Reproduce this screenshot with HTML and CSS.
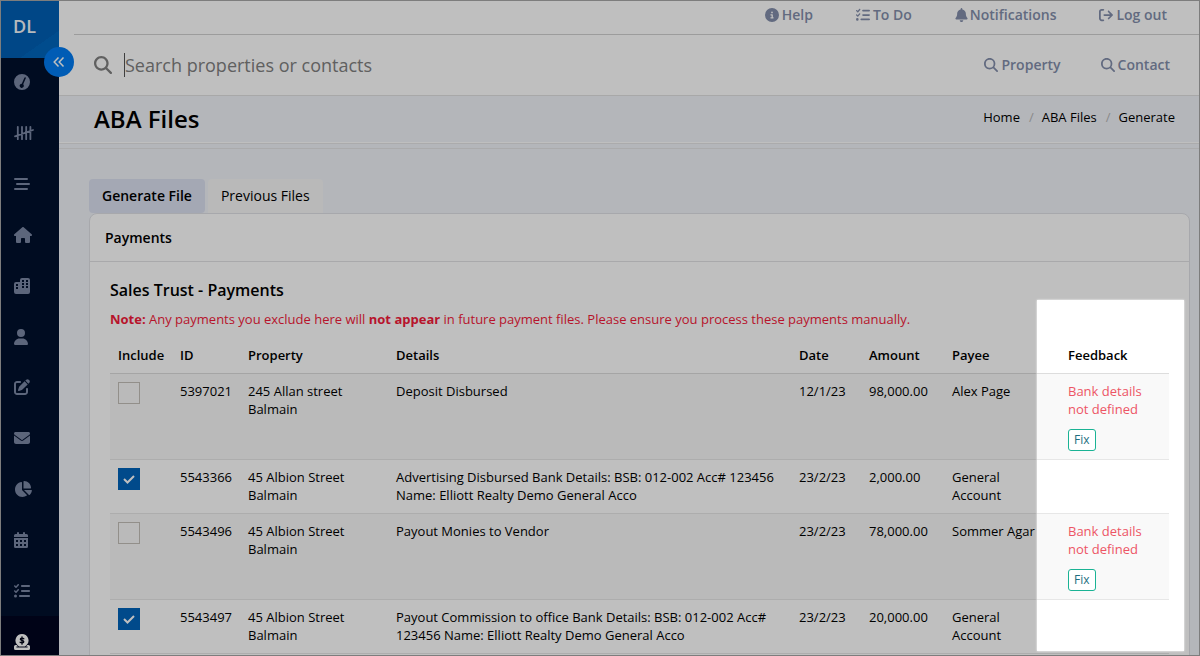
FILE: index.html
```html
<!DOCTYPE html>
<html lang="en">
<head>
<meta charset="utf-8">
<title>ABA Files</title>
<meta name="viewport" content="width=device-width, initial-scale=1">
<link rel="stylesheet" href="styles.css">
</head>
<body>
<svg class="sprite" aria-hidden="true">
  <symbol id="i-search" viewBox="0 0 512 512"><path d="M416 208c0 45.9-14.9 88.3-40 122.7L502.6 457.4c12.5 12.5 12.5 32.8 0 45.3s-32.8 12.5-45.3 0L330.7 376c-34.4 25.2-76.8 40-122.7 40C93.1 416 0 322.9 0 208S93.1 0 208 0S416 93.1 416 208zM208 352a144 144 0 1 0 0-288 144 144 0 1 0 0 288z"/></symbol>
  <symbol id="i-info" viewBox="0 0 512 512"><path d="M256 512A256 256 0 1 0 256 0a256 256 0 1 0 0 512zM216 336h24V272H216c-13.3 0-24-10.7-24-24s10.7-24 24-24h48c13.3 0 24 10.7 24 24v88h8c13.3 0 24 10.7 24 24s-10.7 24-24 24H216c-13.3 0-24-10.7-24-24s10.7-24 24-24zm40-208a32 32 0 1 1 0 64 32 32 0 1 1 0-64z"/></symbol>
  <symbol id="i-list" viewBox="0 0 512 512"><path d="M152.1 38.2c9.9 8.9 10.7 24 1.8 33.9l-72 80c-4.4 4.9-10.6 7.8-17.2 7.9s-12.9-2.4-17.6-7L7 113C-2.3 103.6-2.3 88.4 7 79s24.6-9.4 33.9 0l22.1 22.1 55.1-61.2c8.9-9.9 24-10.7 33.9-1.8zm0 160c9.9 8.9 10.7 24 1.8 33.9l-72 80c-4.4 4.9-10.6 7.8-17.2 7.9s-12.9-2.4-17.6-7L7 273c-9.4-9.4-9.4-24.6 0-33.9s24.6-9.4 33.9 0l22.1 22.1 55.1-61.2c8.9-9.9 24-10.7 33.9-1.8zM224 96c0-17.7 14.3-32 32-32H480c17.7 0 32 14.3 32 32s-14.3 32-32 32H256c-17.7 0-32-14.3-32-32zm0 160c0-17.7 14.3-32 32-32H480c17.7 0 32 14.3 32 32s-14.3 32-32 32H256c-17.7 0-32-14.3-32-32zM160 416c0-17.7 14.3-32 32-32H480c17.7 0 32 14.3 32 32s-14.3 32-32 32H192c-17.7 0-32-14.3-32-32zM48 368a48 48 0 1 1 0 96 48 48 0 1 1 0-96z"/></symbol>
  <symbol id="i-bell" viewBox="0 0 448 512"><path d="M224 0c-17.7 0-32 14.3-32 32V51.2C119 66 64 130.6 64 208v18.8c0 47-17.3 92.4-48.5 127.6l-7.4 8.3c-8.4 9.4-10.4 22.9-5.3 34.4S19.4 416 32 416H416c12.6 0 24-7.4 29.2-18.9s3.1-25-5.3-34.4l-7.4-8.3C401.3 319.2 384 273.9 384 226.8V208c0-77.4-55-142-128-156.8V32c0-17.7-14.3-32-32-32zm45.3 493.3c12-12 18.7-28.3 18.7-45.3H224 160c0 17 6.7 33.3 18.7 45.3s28.3 18.7 45.3 18.7s33.3-6.7 45.3-18.7z"/></symbol>
  <symbol id="i-logout" viewBox="0 0 512 512"><path d="M502.6 278.6c12.5-12.5 12.5-32.8 0-45.3l-128-128c-12.5-12.5-32.8-12.5-45.3 0s-12.5 32.8 0 45.3L402.7 224 192 224c-17.7 0-32 14.3-32 32s14.3 32 32 32l210.7 0-73.4 73.4c-12.5 12.5-12.5 32.8 0 45.3s32.8 12.5 45.3 0l128-128zM160 96c17.7 0 32-14.3 32-32s-14.3-32-32-32L96 32C43 32 0 75 0 128L0 384c0 53 43 96 96 96l64 0c17.7 0 32-14.3 32-32s-14.3-32-32-32l-64 0c-17.7 0-32-14.3-32-32l0-256c0-17.7 14.3-32 32-32l64 0z"/></symbol>
  <symbol id="i-gauge" viewBox="0 0 16 16"><path fill-rule="evenodd" d="M8 0a8 8 0 1 0 0 16A8 8 0 0 0 8 0zM11.4 3.3a.75.75 0 0 1 .4 1L9.2 10.300a2.100 2.100 0 1 1-1.400-.6L10.400 3.700a.75.75 0 0 1 1-.4z"/></symbol>
  <symbol id="i-tally" viewBox="0 0 20 16"><path fill="none" stroke="currentColor" stroke-width="1.8" stroke-linecap="round" d="M3.800 1.800v12.400M8 1.800v12.400M12.200 1.800v12.400M16.400 1.800v12.400M1 11.300l18-6.300"/></symbol>
  <symbol id="i-bars" viewBox="0 0 16 16"><path fill="none" stroke="currentColor" stroke-width="2" stroke-linecap="round" d="M1 3h12M3 8h12M1 13h12"/></symbol>
  <symbol id="i-house" viewBox="0 0 576 512"><path d="M575.800 255.500c0 18-15 32.100-32 32.100h-32l.7 160.200c0 2.700-.2 5.400-.5 8.100V472c0 22.100-17.900 40-40 40H392c-22.100 0-40-17.900-40-40V384c0-17.700-14.300-32-32-32H256c-17.700 0-32 14.300-32 32v88c0 22.100-17.900 40-40 40H104c-22.100 0-40-17.900-40-40V287.600H32c-18 0-32-14-32-32.100c0-9 3-17 10-24L266.400 8c7-7 15-8 22-8s15 2 21 7L564.800 231.500c8 7 12 15 11 24z"/></symbol>
  <symbol id="i-city" viewBox="0 0 16 16"><path fill-rule="evenodd" d="M6 2a2 2 0 0 1 2-2h6a2 2 0 0 1 2 2v12a2 2 0 0 1-2 2H2a2 2 0 0 1-2-2V6a2 2 0 0 1 2-2h4zM8 2v2h2V2zM12 2v2h2V2zM8 5v2h2V5zM12 5v2h2V5zM8 8v2h2V8zM12 8v2h2V8zM2 6v2h2V6zM2 9v2h2V9z"/></symbol>
  <symbol id="i-user" viewBox="0 0 448 512"><path d="M224 256A128 128 0 1 0 224 0a128 128 0 1 0 0 256zm-45.700 48C79.800 304 0 383.800 0 482.300C0 498.700 13.300 512 29.700 512H418.300c16.400 0 29.700-13.300 29.700-29.700C448 383.800 368.200 304 269.700 304H178.300z"/></symbol>
  <symbol id="i-edit" viewBox="0 0 512 512"><path d="M471.600 21.700c-21.900-21.900-57.300-21.900-79.200 0L362.300 51.700l97.900 97.900 30.100-30.100c21.900-21.900 21.900-57.300 0-79.200L471.600 21.700zm-299.200 220c-6.100 6.100-10.800 13.600-13.500 21.900l-29.600 88.800c-2.900 8.600-.6 18.100 5.800 24.600s15.900 8.700 24.600 5.800l88.800-29.600c8.200-2.700 15.700-7.400 21.900-13.500L437.700 172.300 339.700 74.300 172.400 241.700zM96 64C43 64 0 107 0 160V416c0 53 43 96 96 96H352c53 0 96-43 96-96V320c0-17.700-14.300-32-32-32s-32 14.300-32 32v96c0 17.700-14.300 32-32 32H96c-17.700 0-32-14.300-32-32V160c0-17.700 14.300-32 32-32h96c17.700 0 32-14.300 32-32s-14.300-32-32-32H96z"/></symbol>
  <symbol id="i-mail" viewBox="0 0 512 512"><path d="M48 64C21.500 64 0 85.500 0 112c0 15.100 7.100 29.300 19.200 38.400L236.800 313.600c11.400 8.500 27 8.500 38.400 0L492.800 150.400c12.100-9.100 19.200-23.300 19.200-38.400c0-26.500-21.500-48-48-48H48zM0 176V384c0 35.300 28.700 64 64 64H448c35.300 0 64-28.700 64-64V176L294.400 339.200c-22.800 17.100-54 17.100-76.800 0L0 176z"/></symbol>
  <symbol id="i-pie" viewBox="0 0 576 512"><path d="M304 240V16.600c0-9 7-16.600 16-16.600C443.700 0 544 100.300 544 224c0 9-7.600 16-16.600 16H304zM32 272C32 150.700 122.100 50.300 239 34.300c9.200-1.300 17 6.100 17 15.400V288L412.500 444.500c6.700 6.700 6.200 17.700-1.500 23.100C371.800 495.600 323.800 512 272 512C139.500 512 32 404.600 32 272zm526.400 16c9.300 0 16.600 7.800 15.400 17c-7.700 55.900-34.600 105.600-73.900 142.300c-6 5.600-15.400 5.200-21.200-.7L320 288H558.400z"/></symbol>
  <symbol id="i-calendar" viewBox="0 0 14 16"><path fill-rule="evenodd" d="M3 1a1 1 0 0 1 2 0v1h4V1a1 1 0 0 1 2 0v1h1.500A1.500 1.500 0 0 1 14 3.500V5H0V3.500A1.500 1.500 0 0 1 1.500 2H3zM0 6h14v8.500a1.500 1.500 0 0 1-1.500 1.500h-11A1.500 1.500 0 0 1 0 14.500zM2 8v2h2V8zM6 8v2h2V8zM10 8v2h2V8zM2 12v2h2v-2zM6 12v2h2v-2zM10 12v2h2v-2z"/></symbol>
  <symbol id="i-coin" viewBox="0 0 16 16"><path d="M1.500 11h1.200a6.600 6.600 0 0 0 1.300 1.400H2.400V13.600h11.200V12.400H12a6.600 6.600 0 0 0 1.300-1.400h1.200A1.500 1.500 0 0 1 16 12.500v2A1.500 1.500 0 0 1 14.500 16h-13A1.500 1.500 0 0 1 0 14.500v-2A1.500 1.500 0 0 1 1.500 11z"/><path d="M8 0a6.500 6.500 0 0 1 4.600 11.100L11 12.600H5L3.400 11.100A6.500 6.500 0 0 1 8 0z"/><path fill="none" stroke="#000417" stroke-width="1.300" stroke-linecap="round" d="M8 2.800v7.400M9.800 4.700C9 4 6.300 3.900 6.300 5.300c0 1.500 3.500.9 3.500 2.500 0 1.500-2.800 1.300-3.700.5"/></symbol>
</svg>

<div class="page">
  <aside class="sidebar">
    <a class="logo" href="#">DL</a>
    <nav class="menu" aria-label="Main">
      <a href="#" aria-label="Dashboard"><svg class="icon"><use href="#i-gauge"/></svg></a>
      <a href="#" aria-label="Tally"><svg class="icon icon-wide"><use href="#i-tally"/></svg></a>
      <a href="#" aria-label="Pipeline"><svg class="icon"><use href="#i-bars"/></svg></a>
      <a href="#" aria-label="Home"><svg class="icon icon-mid"><use href="#i-house"/></svg></a>
      <a href="#" aria-label="Properties"><svg class="icon"><use href="#i-city"/></svg></a>
      <a href="#" aria-label="Contacts"><svg class="icon icon-slim"><use href="#i-user"/></svg></a>
      <a href="#" aria-label="Edit"><svg class="icon"><use href="#i-edit"/></svg></a>
      <a href="#" aria-label="Mail"><svg class="icon"><use href="#i-mail"/></svg></a>
      <a href="#" aria-label="Reports"><svg class="icon icon-mid"><use href="#i-pie"/></svg></a>
      <a href="#" aria-label="Calendar"><svg class="icon icon-slim"><use href="#i-calendar"/></svg></a>
      <a href="#" aria-label="Tasks"><svg class="icon"><use href="#i-list"/></svg></a>
      <a class="active" href="#" aria-label="Trust"><svg class="icon"><use href="#i-coin"/></svg></a>
    </nav>
    <button class="collapse" type="button" aria-label="Expand menu"><svg viewBox="0 0 12 12"><path d="M5.500 1.500L1.200 6l4.300 4.500M10.500 1.500L6.200 6l4.300 4.500"/></svg></button>
  </aside>

  <div class="main">
    <header class="header">
      <nav class="topbar" aria-label="Account">
        <a href="#"><svg class="glyph"><use href="#i-info"/></svg>Help</a>
        <a href="#"><svg class="glyph"><use href="#i-list"/></svg>To Do</a>
        <a class="tight" href="#"><svg class="glyph glyph-bell"><use href="#i-bell"/></svg>Notifications</a>
        <a href="#"><svg class="glyph"><use href="#i-logout"/></svg>Log out</a>
      </nav>
      <form class="searchbar">
        <label class="search-label" for="search" aria-label="Search"><svg class="search-icon"><use href="#i-search"/></svg></label>
        <input class="search-input" id="search" type="text" placeholder="Search properties or contacts">
        <div class="search-links">
          <a href="#"><svg class="glyph"><use href="#i-search"/></svg>Property</a>
          <a href="#"><svg class="glyph"><use href="#i-search"/></svg>Contact</a>
        </div>
      </form>
    </header>

    <div class="heading">
      <h1>ABA Files</h1>
      <ol class="breadcrumb">
        <li><a href="#">Home</a></li>
        <li><a href="#">ABA Files</a></li>
        <li><a href="#">Generate</a></li>
      </ol>
    </div>

    <main class="content">
      <div class="tabs">
        <button class="tab tab-active" type="button">Generate File</button>
        <button class="tab" type="button">Previous Files</button>
      </div>
      <section class="card">
        <h2 class="card-title">Payments</h2>
        <div class="card-body">
          <h3>Sales Trust - Payments</h3>
          <p class="note"><strong>Note:</strong> Any payments you exclude here will <strong>not appear</strong> in future payment files. Please ensure you process these payments manually.</p>
          <table class="payments">
            <colgroup>
              <col class="c-include"><col class="c-id"><col class="c-property"><col><col class="c-date"><col class="c-amount"><col class="c-payee"><col class="c-feedback">
            </colgroup>
            <thead>
              <tr><th>Include</th><th>ID</th><th>Property</th><th>Details</th><th>Date</th><th>Amount</th><th>Payee</th><th>Feedback</th></tr>
            </thead>
            <tbody>
              <tr>
                <td><input type="checkbox" aria-label="Include 5397021"></td>
                <td>5397021</td><td>245 Allan street<br>Balmain</td><td>Deposit Disbursed</td>
                <td>12/1/23</td><td>98,000.00</td><td>Alex Page</td>
                <td><span class="error">Bank details not defined</span><button class="fix" type="button">Fix</button></td>
              </tr>
              <tr>
                <td><input type="checkbox" aria-label="Include 5543366" checked></td>
                <td>5543366</td><td>45 Albion Street<br>Balmain</td><td>Advertising Disbursed Bank Details: BSB: 012-002 Acc# 123456 Name: Elliott Realty Demo General Acco</td>
                <td>23/2/23</td><td>2,000.00</td><td>General<br>Account</td><td></td>
              </tr>
              <tr>
                <td><input type="checkbox" aria-label="Include 5543496"></td>
                <td>5543496</td><td>45 Albion Street<br>Balmain</td><td>Payout Monies to Vendor</td>
                <td>23/2/23</td><td>78,000.00</td><td>Sommer Agar</td>
                <td><span class="error">Bank details not defined</span><button class="fix" type="button">Fix</button></td>
              </tr>
              <tr>
                <td><input type="checkbox" aria-label="Include 5543497" checked></td>
                <td>5543497</td><td>45 Albion Street<br>Balmain</td><td>Payout Commission to office Bank Details: BSB: 012-002 Acc# 123456 Name: Elliott Realty Demo General Acco</td>
                <td>23/2/23</td><td>20,000.00</td><td>General<br>Account</td><td></td>
              </tr>
            </tbody>
          </table>
        </div>
      </section>
    </main>
  </div>
  <div class="spotlight"></div>
  <div class="frame"></div>
</div>
</body>
</html>
```
FILE: styles.css
```css
* { box-sizing: border-box; }

body {
  margin: 0;
  font-family: "Open Sans", "Noto Sans", sans-serif;
  font-size: 13px;
  line-height: 18px;
  color: #000;
  background: #f0f3f9;
}

a { color: inherit; text-decoration: none; }
button, input { font: inherit; color: inherit; }
h1, h2, h3, p, ol { margin: 0; padding: 0; }

.sprite { position: absolute; width: 0; height: 0; }

.page {
  position: relative;
  display: flex;
  height: 100vh;
  padding: 1px;
  overflow: hidden;
}

.sidebar {
  position: relative;
  z-index: 1;
  flex: none;
  width: 58px;
  background: #00102c;
}

.logo {
  display: flex;
  align-items: center;
  height: 57px;
  padding: 0 12px 7px;
  font-size: 18px;
  font-weight: 600;
  color: #f4f8fc;
  background: linear-gradient(145deg, #005fb4 0 72%, #0066bd 72%);
}

.menu { display: grid; grid-auto-rows: 1fr; height: 610px; margin-top: -1px; color: #7b88a5; }
.menu a { display: flex; align-items: center; padding-left: 13px; }
.menu .active { color: #fff; background: #00051f; }

.icon { width: 16px; height: 16px; fill: currentColor; }
.icon-slim { width: 14px; }
.icon-mid { width: 18px; }
.icon-wide { width: 20px; }

.collapse {
  position: absolute;
  top: 46px;
  right: -15px;
  display: grid;
  place-items: center;
  width: 30px;
  height: 30px;
  padding: 0;
  border: 0;
  border-radius: 50%;
  background: #007bf2;
}
.collapse svg { width: 12px; height: 12px; fill: none; stroke: #fff; stroke-width: 1.5; }

.main { flex: 1; min-width: 0; }

.header { background: #fff; border-bottom: 1px solid #e0e0e0; color: #838eab; font-size: 14px; font-weight: 600; }
.header a { display: flex; align-items: center; gap: 3px; }
.header .tight { gap: 2px; }
.glyph { width: 14px; height: 14px; fill: currentColor; }
.glyph-bell { width: 13px; }

.topbar {
  display: flex;
  justify-content: flex-end;
  align-items: center;
  gap: 43px;
  height: 34px;
  margin-left: 15px;
  padding: 0 32px 5px 0;
  border-bottom: 1px solid #d0d0d0;
}

.searchbar { display: flex; align-items: center; height: 60px; padding: 0 29px 0 35px; }
.search-label { display: flex; }
.search-icon { width: 18px; height: 18px; fill: #808080; }
.search-input {
  flex: 1;
  min-width: 0;
  height: 24px;
  margin-left: 12px;
  padding: 0;
  border: 0;
  border-left: 1px solid #555;
  outline: 0;
  background: none;
  font-size: 18px;
  font-weight: 400;
}
.search-input::placeholder { color: #808080; opacity: 1; }
.search-links { display: flex; gap: 40px; }

.heading {
  display: flex;
  justify-content: space-between;
  align-items: center;
  height: 53px;
  padding: 0 24px 6px 35px;
  border-bottom: 1px solid #e4e4e6;
  background: linear-gradient(to top, transparent 4px, #e4e4e6 4px 5px, #fff 5px 6px, transparent 6px);
}
h1 { font-size: 24px; line-height: 32px; font-weight: 600; }
.breadcrumb { display: flex; padding-bottom: 4px; list-style: none; }
.breadcrumb li + li::before { content: "/"; padding: 0 8px 0 9px; color: #b8b8b8; }

.content { padding: 30px 9px 20px 30px; }
.tabs { display: flex; gap: 3px; }
.tab {
  height: 34px;
  padding: 0 13px;
  border: 0;
  border-radius: 4px 4px 0 0;
  background: #f7f7f7;
  font-size: 14px;
}
.tab-active { border-radius: 4px; background: #dbe0f0; font-weight: 600; }

.card { border: 1px solid #dfe1e6; border-radius: 8px; background: #fff; }
.card-title { padding: 15px 15px 14px; border-bottom: 1px solid #e2e2e4; font-size: 14px; line-height: 18px; font-weight: 600; }
.card-body { padding: 16px 20px 20px; }
h3 { font-size: 16px; line-height: 24px; font-weight: 600; }
.note { margin: 8px 0 9px; color: #f41a3a; }
.note strong { font-weight: 700; }

.payments { width: 100%; border-collapse: collapse; table-layout: fixed; }
.c-include { width: 62px; }
.c-id { width: 68px; }
.c-property { width: 148px; }
.c-date { width: 70px; }
.c-amount { width: 83px; }
.c-payee { width: 116px; }
.c-feedback { width: 109px; }
.payments th { padding: 9px 8px; border-bottom: 1px solid #ddd; text-align: left; font-weight: 600; }
.payments td { height: 54px; padding: 8px; border-bottom: 1px solid #e7e7e7; vertical-align: top; }
.payments tbody tr:nth-child(odd) { background: #f9f9f9; }
.payments td:nth-child(7) { padding-right: 0; }

.payments input {
  display: block;
  width: 22px;
  height: 22px;
  margin: 0;
  appearance: none;
  border: 1px solid #c3bfb8;
}
.payments input:checked {
  border-color: #0063ba;
  background: #0063ba url("data:image/svg+xml,%3Csvg xmlns='http://www.w3.org/2000/svg' viewBox='0 0 20 20'%3E%3Cpath d='M5 10l3.500 3.500L15 7' fill='none' stroke='white' stroke-width='2'/%3E%3C/svg%3E") center / 20px no-repeat;
}

.error { display: block; color: #ed5565; }
.fix {
  display: block;
  height: 22px;
  margin-top: 11px;
  padding: 0 5px;
  border: 1px solid #1ab394;
  border-radius: 3px;
  background: #fff;
  font-size: 12px;
  line-height: 18px;
  color: #1f6f80;
}

.spotlight {
  position: absolute;
  z-index: 2;
  top: 300px;
  right: 16px;
  width: 147px;
  height: 351px;
  box-shadow: 0 0 2px #fff, 0 0 0 200vmax rgba(0, 0, 0, .25);
  pointer-events: none;
}
.frame { position: absolute; z-index: 3; inset: 0; border: 1px solid #7d7d7d; pointer-events: none; }
```
